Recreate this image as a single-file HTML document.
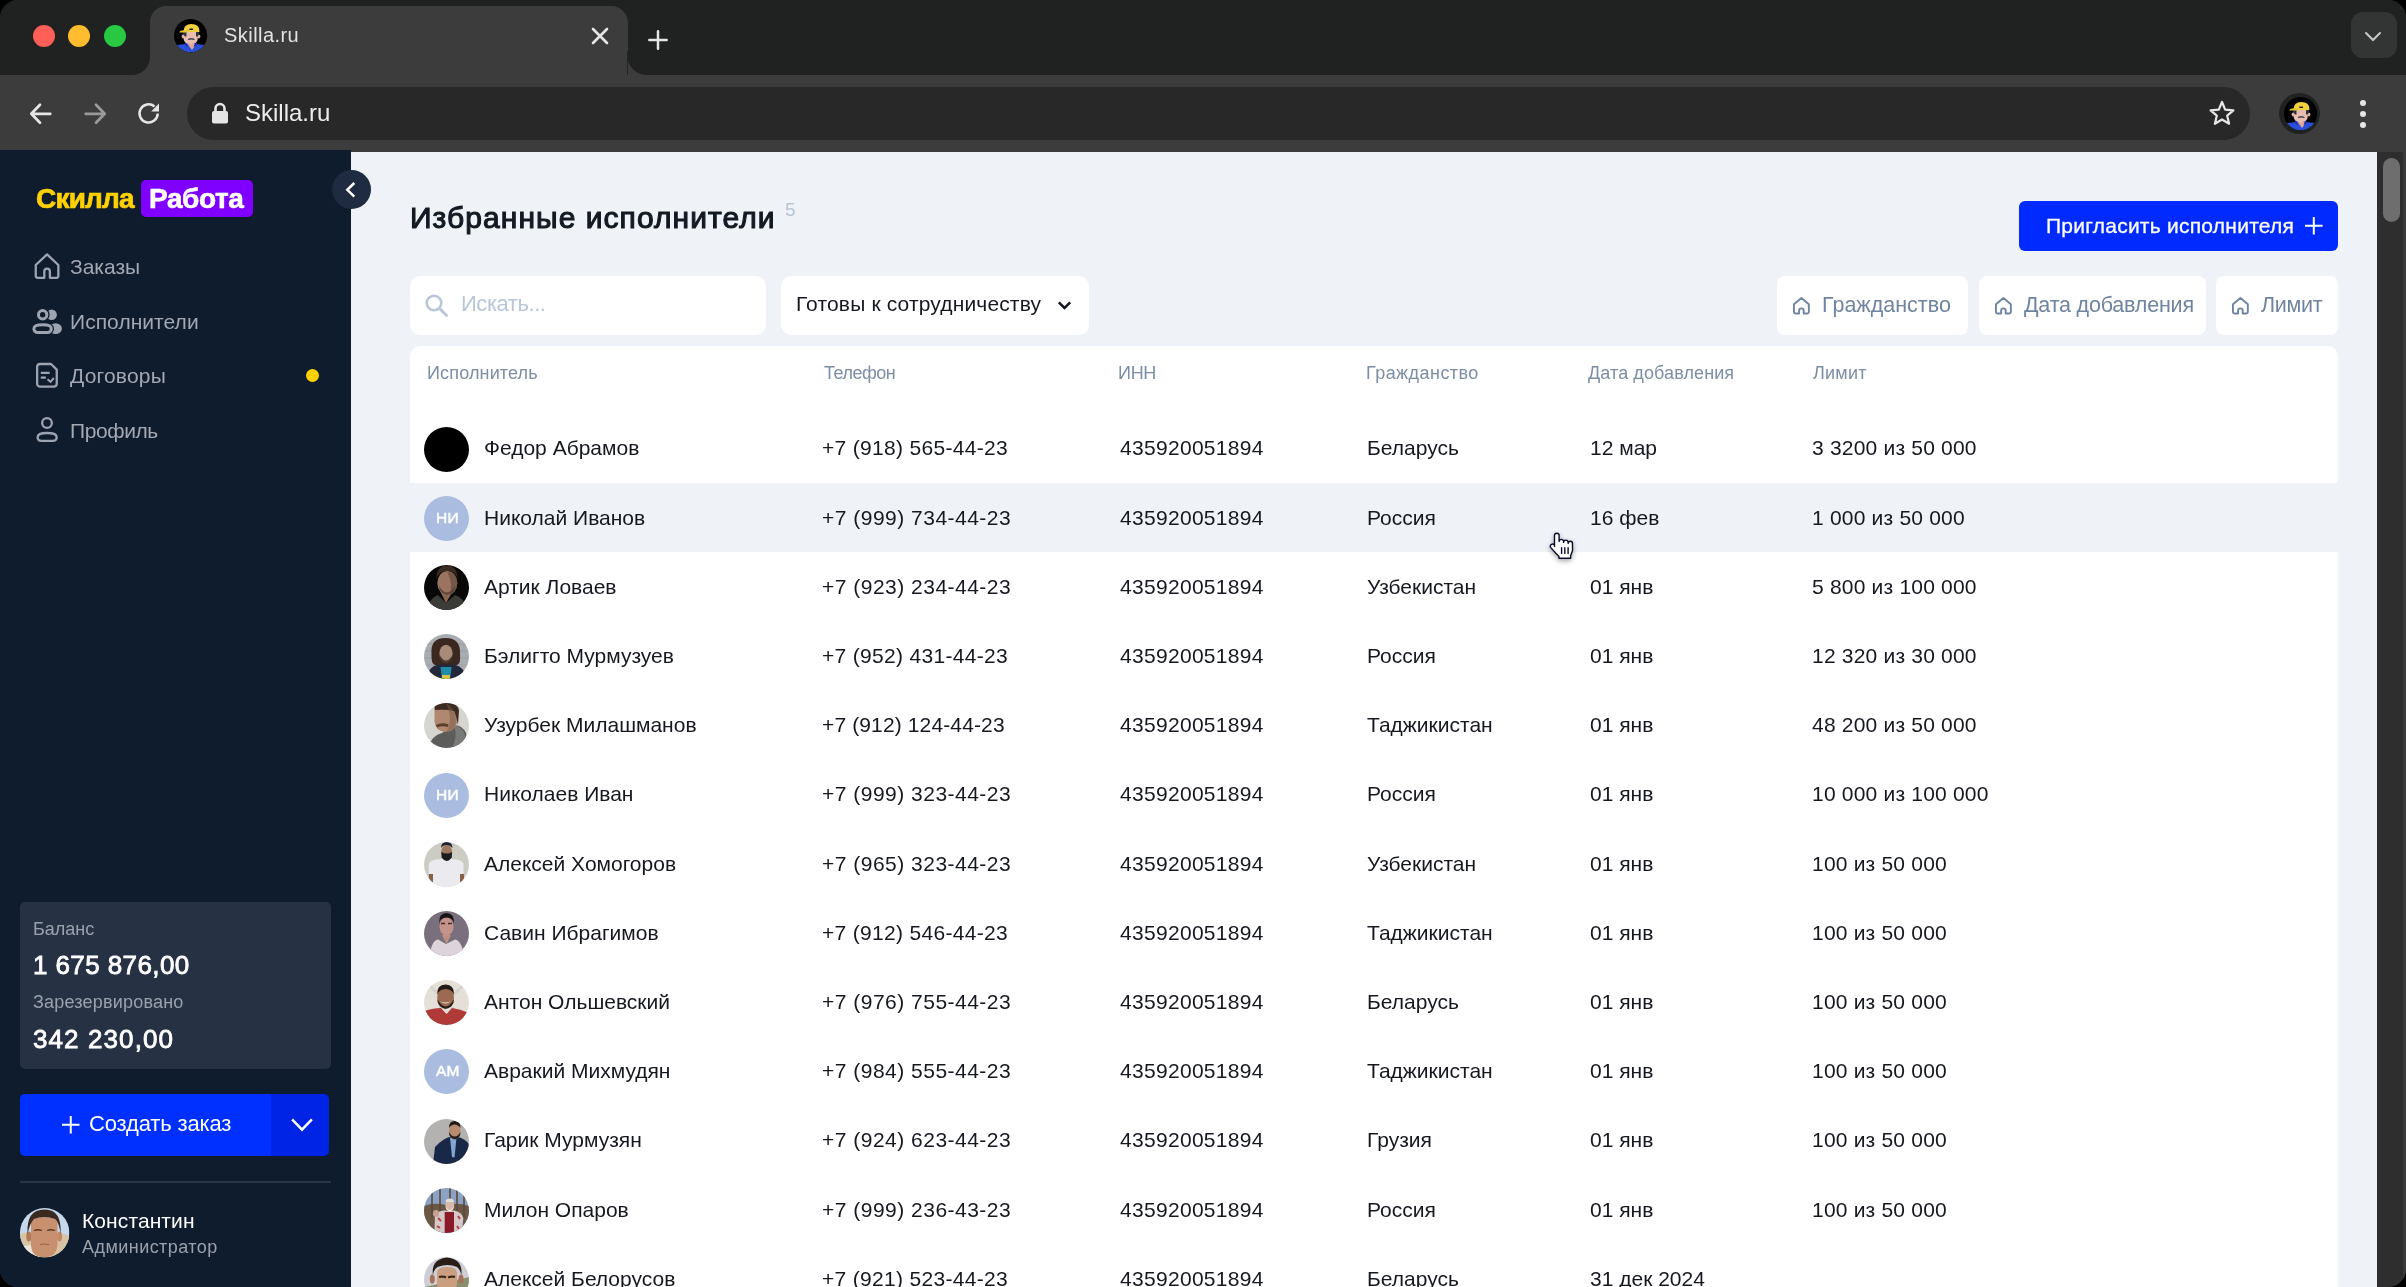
<!DOCTYPE html><html><head><meta charset="utf-8"><style>
*{margin:0;padding:0;box-sizing:border-box}
html,body{width:2406px;height:1287px;overflow:hidden;background:#000}
body{font-family:"Liberation Sans",sans-serif;position:relative}
.win{position:absolute;left:0;top:0;width:2406px;height:1287px;border-radius:18px;overflow:hidden;background:#202221}
.t{position:absolute;line-height:1;white-space:nowrap;will-change:transform}
.abs{position:absolute}
svg{position:absolute;overflow:visible}
</style></head><body>
<div class="win">
<div class="abs" style="left:0;top:0;width:2406px;height:75px;background:#202221"></div>
<div class="abs" style="left:33px;top:25px;width:22px;height:22px;border-radius:50%;background:#ff5f57"></div>
<div class="abs" style="left:68px;top:25px;width:22px;height:22px;border-radius:50%;background:#febc2e"></div>
<div class="abs" style="left:103.5px;top:25px;width:22px;height:22px;border-radius:50%;background:#28c840"></div>
<div class="abs" style="left:150px;top:6px;width:477.5px;height:70px;background:#3c3c3c;border-radius:16px 17px 0 0"></div>
<div class="abs" style="left:132px;top:57px;width:18px;height:18px;background:radial-gradient(circle at 0 0,#202221 17.5px,#3c3c3c 18.5px)"></div>
<div class="abs" style="left:627px;top:55px;width:20px;height:20px;background:radial-gradient(circle at 100% 0,#202221 19.5px,#3c3c3c 20.5px)"></div>
<div class="abs" style="left:627.2px;top:51px;width:1px;height:24px;background:#262626"></div>
<svg style="left:173.7px;top:19.1px" width="33.2" height="33.2" viewBox="0 0 33.2 33.2"><circle cx="16.6" cy="16.6" r="16.6" fill="#000"/><clipPath id="fc"><circle cx="16.6" cy="16.6" r="16.6"/></clipPath><g clip-path="url(#fc)"><path d="M0 33.2V27Q4 25.5 10 25.2L13 22.5H20.5L23.5 25.2Q29 25.5 33.2 27V33.2Z" fill="#2b4fd8"/><path d="M13.5 25L18 31L22.3 25Z" fill="#e2a898"/><path d="M12 22.5L14 28L10.5 26Z M21.5 22.5L19.5 28L23 26Z" fill="#1a2fa0"/><ellipse cx="9.2" cy="17.5" rx="1.6" ry="2.1" fill="#e0b0a0"/><ellipse cx="24.8" cy="17.5" rx="1.6" ry="2.1" fill="#e0b0a0"/><path d="M9.7 13V20Q10 25 16.7 25.2Q23.5 25 23.7 20V13Z" fill="#e8bcae"/><path d="M8.9 13H12.5V17.4H11Q9.5 16 8.9 13Z M25.2 13H22V17.4H23.5Q25 16 25.2 13Z" fill="#2a3244"/><path d="M13.7 20.9Q14.5 18.6 17.3 19.3Q20.1 18.6 20.9 20.9Q17.3 20 13.7 20.9Z" fill="#252c3c"/><path d="M9.4 13.1Q9.4 5.1 17.4 5.1Q25.4 5.1 25.4 12V13.1Z" fill="#f0d03c"/><path d="M5.2 13.4Q6 11.3 10 11.2H14V13.6H6Z" fill="#e8c830"/><rect x="15.3" y="9.6" width="3.8" height="1.4" rx=".5" fill="#1a2040"/></g></svg>
<div class="t" style="left:224px;top:25.3px;font-size:20px;color:#e3e3e3;font-weight:400;letter-spacing:0.45px;">Skilla.ru</div>
<svg style="left:592px;top:28px" width="16" height="16" viewBox="0 0 16 16"><path d="M1 1L15 15M15 1L1 15" stroke="#e6e6e6" stroke-width="2.6" stroke-linecap="round"/></svg>
<svg style="left:648px;top:30px" width="20" height="20" viewBox="0 0 20 20"><path d="M10 1.3V18.7M1.3 10H18.7" stroke="#e6e6e6" stroke-width="2.5" stroke-linecap="round"/></svg>
<div class="abs" style="left:2351px;top:12px;width:46px;height:46px;border-radius:12px;background:#333534"></div>
<svg style="left:2365px;top:32px" width="16" height="9" viewBox="0 0 16 9"><path d="M1 1L8 8L15 1" stroke="#c8c8c8" stroke-width="2" fill="none" stroke-linecap="round"/></svg>
<div class="abs" style="left:0;top:75px;width:2406px;height:77px;background:#3c3c3c"></div>
<div class="abs" style="left:187px;top:87px;width:2063px;height:53px;border-radius:27px;background:#282828"></div>
<svg style="left:29px;top:101.5px" width="24" height="24" viewBox="0 0 24 24"><path d="M21.3 11.8H3M11 2.8L2.3 11.8L11 20.8" stroke="#e6e6e6" stroke-width="2.7" fill="none" stroke-linecap="round" stroke-linejoin="round"/></svg>
<svg style="left:83px;top:101.5px" width="24" height="24" viewBox="0 0 24 24"><path d="M2.7 11.8H21M13 2.8L21.7 11.8L13 20.8" stroke="#9a9a9a" stroke-width="2.7" fill="none" stroke-linecap="round" stroke-linejoin="round"/></svg>
<svg style="left:137px;top:102px" width="24" height="24" viewBox="0 0 24 24"><path d="M20.7 11.5A9.1 9.1 0 1 1 17.5 4.5" stroke="#e6e6e6" stroke-width="2.5" fill="none"/><path d="M22 1.6V9.6H14.2Z" fill="#e6e6e6"/></svg>
<svg style="left:211px;top:102px" width="18" height="22" viewBox="0 0 18 22"><rect x="1" y="9" width="16" height="12.5" rx="2" fill="#e6e6e6"/><path d="M4.5 10V6.5A4.5 4.5 0 0 1 13.5 6.5V10" stroke="#e6e6e6" stroke-width="2.6" fill="none"/></svg>
<div class="t" style="left:245px;top:101.3px;font-size:24px;color:#ececec;font-weight:400;letter-spacing:0px;">Skilla.ru</div>
<svg style="left:2209px;top:100px" width="26" height="26" viewBox="0 0 26 26"><path d="M13 2L16.2 9.6L24.4 10.3L18.2 15.7L20.1 23.8L13 19.5L5.9 23.8L7.8 15.7L1.6 10.3L9.8 9.6Z" stroke="#e6e6e6" stroke-width="2.2" fill="none" stroke-linejoin="round"/></svg>
<div class="abs" style="left:2279px;top:93px;width:41.2px;height:41.2px;border-radius:50%;background:#202221"></div>
<svg style="left:2283.9px;top:96.9px" width="33.2" height="33.2" viewBox="0 0 33.2 33.2"><circle cx="16.6" cy="16.6" r="16.6" fill="#000"/><clipPath id="pc"><circle cx="16.6" cy="16.6" r="16.6"/></clipPath><g clip-path="url(#pc)"><path d="M0 33.2V27Q4 25.5 10 25.2L13 22.5H20.5L23.5 25.2Q29 25.5 33.2 27V33.2Z" fill="#2b4fd8"/><path d="M13.5 25L18 31L22.3 25Z" fill="#e2a898"/><path d="M12 22.5L14 28L10.5 26Z M21.5 22.5L19.5 28L23 26Z" fill="#1a2fa0"/><ellipse cx="9.2" cy="17.5" rx="1.6" ry="2.1" fill="#e0b0a0"/><ellipse cx="24.8" cy="17.5" rx="1.6" ry="2.1" fill="#e0b0a0"/><path d="M9.7 13V20Q10 25 16.7 25.2Q23.5 25 23.7 20V13Z" fill="#e8bcae"/><path d="M8.9 13H12.5V17.4H11Q9.5 16 8.9 13Z M25.2 13H22V17.4H23.5Q25 16 25.2 13Z" fill="#2a3244"/><path d="M13.7 20.9Q14.5 18.6 17.3 19.3Q20.1 18.6 20.9 20.9Q17.3 20 13.7 20.9Z" fill="#252c3c"/><path d="M9.4 13.1Q9.4 5.1 17.4 5.1Q25.4 5.1 25.4 12V13.1Z" fill="#f0d03c"/><path d="M5.2 13.4Q6 11.3 10 11.2H14V13.6H6Z" fill="#e8c830"/><rect x="15.3" y="9.6" width="3.8" height="1.4" rx=".5" fill="#1a2040"/></g></svg>
<div class="abs" style="left:2359.5px;top:100px;width:6px;height:6px;border-radius:50%;background:#e6e6e6"></div>
<div class="abs" style="left:2359.5px;top:111px;width:6px;height:6px;border-radius:50%;background:#e6e6e6"></div>
<div class="abs" style="left:2359.5px;top:121.5px;width:6px;height:6px;border-radius:50%;background:#e6e6e6"></div>
<div class="abs" style="left:0;top:150px;width:351px;height:1137px;background:#0f1c2d"></div>
<div class="abs" style="left:351px;top:152px;width:2026px;height:1135px;background:#eff2f7"></div>
<div class="abs" style="left:2377px;top:152px;width:29px;height:1135px;background:#2e2e2e"></div>
<div class="abs" style="left:2403px;top:152px;width:3px;height:1135px;background:#3a3a3a"></div>
<div class="abs" style="left:2383px;top:158px;width:17px;height:64px;border-radius:9px;background:#6e6e6e"></div>
<div class="t" style="left:35.8px;top:184.9px;font-size:28px;color:#ffd100;font-weight:700;letter-spacing:-0.8px;-webkit-text-stroke:0.7px #ffd100;">Скилла</div>
<div class="abs" style="left:140.5px;top:180px;width:112.5px;height:37px;border-radius:5px;background:#8000ff"></div>
<div class="t" style="left:149.2px;top:184.9px;font-size:28px;color:#ffffff;font-weight:700;letter-spacing:-0.4px;-webkit-text-stroke:0.6px #fff;">Работа</div>
<div class="abs" style="left:331.5px;top:170px;width:39px;height:39px;border-radius:50%;background:#1f2b40"></div>
<svg style="left:345px;top:182px" width="12" height="16" viewBox="0 0 12 16"><path d="M9.3 1L2.3 7.8L9.3 14.6" stroke="#fff" stroke-width="2.5" fill="none" stroke-linecap="butt" stroke-linejoin="miter"/></svg>
<svg style="left:34px;top:253px" width="26" height="26" viewBox="0 0 26 26"><path d="M10.3 24.85V18.45A2.8 2.8 0 0 1 15.9 18.45V24.85H22.35A2 2 0 0 0 24.35 22.85V12L13.05 1.35L1.75 12V22.85A2 2 0 0 0 3.75 24.85Z" stroke="#9ea3b0" stroke-width="2.3" fill="none" stroke-linejoin="round"/></svg>
<svg style="left:30px;top:306px" width="34" height="30" viewBox="30 306 34 30"><circle cx="51.7" cy="314.7" r="5.2" fill="#9ea3b0"/><ellipse cx="55.6" cy="328.6" rx="6.3" ry="5.4" fill="#9ea3b0"/><circle cx="42.65" cy="314.75" r="7.0" fill="#0f1c2d"/><path d="M37.6 332.45H47.6A3.7 3.8 0 0 0 51.3 328.65Q51.3 324.85 42.6 324.85Q33.9 324.85 33.9 328.65A3.7 3.8 0 0 0 37.6 332.45Z" fill="#0f1c2d" stroke="#0f1c2d" stroke-width="5.4"/><circle cx="42.65" cy="314.75" r="4.2" stroke="#9ea3b0" stroke-width="3.0" fill="none"/><path d="M37.6 332.45H47.6A3.7 3.8 0 0 0 51.3 328.65Q51.3 324.85 42.6 324.85Q33.9 324.85 33.9 328.65A3.7 3.8 0 0 0 37.6 332.45Z" stroke="#9ea3b0" stroke-width="3.0" fill="none"/></svg>
<svg style="left:34px;top:360px" width="26" height="30" viewBox="34 360 26 30"><path d="M40 364H51L56.75 369.6V383.8A3 3 0 0 1 53.75 386.65H40.15A3 3 0 0 1 37.15 383.65V367A3 3 0 0 1 40 364Z" stroke="#9ea3b0" stroke-width="2.3" fill="none" stroke-linejoin="round"/><path d="M40.8 372.9H49.6M40.8 377.7H45.9" stroke="#9ea3b0" stroke-width="2.3" stroke-linecap="butt"/><path d="M47.5 379.2L50.5 381.8L53.8 378" stroke="#9ea3b0" stroke-width="2" fill="none" stroke-linecap="butt" stroke-linejoin="miter"/></svg>
<svg style="left:34px;top:414px" width="26" height="30" viewBox="34 414 26 30"><circle cx="47" cy="423" r="4.85" stroke="#9ea3b0" stroke-width="2.3" fill="none"/><path d="M37.6 437.2C37.6 434.3 42 433 47.1 433C52.2 433 56.7 434.3 56.7 437.2C56.7 439.7 55.3 440.85 52.7 440.85H41.5C38.9 440.85 37.6 439.7 37.6 437.2Z" stroke="#9ea3b0" stroke-width="2.3" fill="none"/></svg>
<div class="t" style="left:70px;top:256.2px;font-size:21px;color:#a3a8b3;font-weight:400;letter-spacing:0px;">Заказы</div>
<div class="t" style="left:70px;top:311.0px;font-size:21px;color:#a3a8b3;font-weight:400;letter-spacing:0.05px;">Исполнители</div>
<div class="t" style="left:70px;top:364.7px;font-size:21px;color:#a3a8b3;font-weight:400;letter-spacing:0.2px;">Договоры</div>
<div class="t" style="left:70px;top:419.7px;font-size:21px;color:#a3a8b3;font-weight:400;letter-spacing:-0.4px;">Профиль</div>
<div class="abs" style="left:306px;top:369px;width:13px;height:13px;border-radius:50%;background:#ffd100"></div>
<div class="abs" style="left:20px;top:902px;width:311px;height:167px;border-radius:5px;background:#263244"></div>
<div class="t" style="left:32.6px;top:920.1px;font-size:18px;color:#9aa1ad;font-weight:400;letter-spacing:0px;">Баланс</div>
<div class="t" style="left:32.6px;top:952.0px;font-size:26px;color:#ffffff;font-weight:400;letter-spacing:0.4px;-webkit-text-stroke:0.8px #fff;">1 675 876,00</div>
<div class="t" style="left:32.6px;top:992.8px;font-size:18px;color:#9aa1ad;font-weight:400;letter-spacing:0.2px;">Зарезервировано</div>
<div class="t" style="left:32.6px;top:1025.6px;font-size:26px;color:#ffffff;font-weight:400;letter-spacing:1.1px;-webkit-text-stroke:0.8px #fff;">342 230,00</div>
<div class="abs" style="left:20px;top:1094px;width:309px;height:61.5px;border-radius:5px;background:#0024e6;overflow:hidden"><div class="abs" style="left:0;top:0;width:251px;height:61.5px;background:#0030ff"></div></div>
<svg style="left:61.5px;top:1116px" width="17.5" height="17.5" viewBox="0 0 17.5 17.5"><path d="M8.75 0V17.5M0 8.75H17.5" stroke="#fff" stroke-width="2"/></svg>
<div class="t" style="left:89px;top:1112.9px;font-size:22px;color:#ffffff;font-weight:400;letter-spacing:-0.15px;">Создать заказ</div>
<svg style="left:292px;top:1118.5px" width="20" height="13" viewBox="0 0 20 13"><path d="M1 1.3L10 10.6L19 1.3" stroke="#fff" stroke-width="2.5" fill="none" stroke-linecap="square" stroke-linejoin="miter"/></svg>
<div class="abs" style="left:20px;top:1180.5px;width:311px;height:2px;background:#2a3546"></div>
<svg style="left:19.9px;top:1207.6px" width="49.4" height="49.4" viewBox="0 0 49.4 49.4"><clipPath id="uc"><circle cx="24.7" cy="24.7" r="24.7"/></clipPath><g clip-path="url(#uc)"><rect width="49.4" height="49.4" fill="#c6d8ec"/><path d="M0 26Q12 22 24 26Q36 22 49.4 28V49.4H0Z" fill="#d8c4a4"/><path d="M0 40Q10 34 20 40L20 49.4H0Z" fill="#ece4d8"/><ellipse cx="8.8" cy="28.5" rx="2.5" ry="5" fill="#b07a5a"/><ellipse cx="39.6" cy="28.5" rx="2.5" ry="5" fill="#c08a6a"/><path d="M11 16Q11 9 24 9Q37.5 9 37.5 16V36Q37 49.4 24 49.4Q11 49.4 11 36Z" fill="#c8906e"/><path d="M14 22.5Q18 21 22 22.5M27 22.5Q31 21 35 22.5" stroke="#5a3a28" stroke-width="1.3" fill="none"/><path d="M20 36.5Q24 35.5 29 36.5" stroke="#9a5a4a" stroke-width="1.2" fill="none"/><path d="M7.5 26Q6 1 25 1.4Q42 1.5 40.6 26Q39 14 35 11Q24 7 14 11Q10 15 7.5 26Z" fill="#3a2a20"/></g></svg>
<div class="t" style="left:82px;top:1209.6px;font-size:21px;color:#ffffff;font-weight:400;letter-spacing:0.1px;">Константин</div>
<div class="t" style="left:82px;top:1238.2px;font-size:18px;color:#9aa1ad;font-weight:400;letter-spacing:0.45px;">Администратор</div>
<div class="t" style="left:410.3px;top:203.2px;font-size:30px;color:#141a24;font-weight:400;letter-spacing:1.05px;-webkit-text-stroke:1.1px #141a24;">Избранные исполнители</div>
<div class="t" style="left:784.5px;top:199.9px;font-size:19px;color:#b8c2d0;font-weight:400;letter-spacing:0px;">5</div>
<div class="abs" style="left:2019px;top:201px;width:319px;height:50px;border-radius:6px;background:#002aff"></div>
<div class="t" style="left:2046px;top:214.8px;font-size:21px;color:#ffffff;font-weight:400;letter-spacing:0.25px;-webkit-text-stroke:0.3px #fff;">Пригласить исполнителя</div>
<svg style="left:2304.7px;top:217.3px" width="17.6" height="17.6" viewBox="0 0 17.6 17.6"><path d="M8.8 0V17.6M0 8.8H17.6" stroke="#fff" stroke-width="2"/></svg>
<div class="abs" style="left:410px;top:276px;width:356px;height:58.5px;border-radius:10px;background:#fff"></div>
<svg style="left:424px;top:293px" width="26" height="26" viewBox="0 0 26 26"><circle cx="10" cy="10" r="7.3" stroke="#b9c5d8" stroke-width="2.6" fill="none"/><path d="M15.5 15.5L22.5 22.5" stroke="#b9c5d8" stroke-width="2.8" stroke-linecap="round"/></svg>
<div class="t" style="left:461px;top:293.2px;font-size:22px;color:#b9c5d8;font-weight:400;letter-spacing:-0.45px;">Искать...</div>
<div class="abs" style="left:781px;top:276px;width:308px;height:58.5px;border-radius:10px;background:#fff"></div>
<div class="t" style="left:796px;top:293.1px;font-size:21px;color:#15191f;font-weight:400;letter-spacing:0.15px;">Готовы к сотрудничеству</div>
<svg style="left:1057px;top:300px" width="16" height="12" viewBox="0 0 16 12"><path d="M1.8 2.4L7.5 8L13.2 2.4" stroke="#15191f" stroke-width="2.5" fill="none" stroke-linecap="butt" stroke-linejoin="miter"/></svg>
<div class="abs" style="left:1777.4px;top:276px;width:191.0px;height:58.5px;border-radius:8px;background:#fff"></div>
<svg style="left:1793.4px;top:297px" width="17" height="18" viewBox="0 0 17 18"><path d="M6.1 16.55V13.65A2.3 2.3 0 0 1 10.7 13.65V16.55H14.35A1.5 1.5 0 0 0 15.85 15.05V7.2L8.4 0.95L0.95 7.2V15.05A1.5 1.5 0 0 0 2.45 16.55Z" stroke="#6e84a0" stroke-width="1.9" fill="none" stroke-linejoin="round"/></svg>
<div class="t" style="left:1822.4px;top:294.8px;font-size:21.5px;color:#6e84a0;font-weight:400;letter-spacing:0px;">Гражданство</div>
<div class="abs" style="left:1978.6px;top:276px;width:227.4000000000001px;height:58.5px;border-radius:8px;background:#fff"></div>
<svg style="left:1994.6px;top:297px" width="17" height="18" viewBox="0 0 17 18"><path d="M6.1 16.55V13.65A2.3 2.3 0 0 1 10.7 13.65V16.55H14.35A1.5 1.5 0 0 0 15.85 15.05V7.2L8.4 0.95L0.95 7.2V15.05A1.5 1.5 0 0 0 2.45 16.55Z" stroke="#6e84a0" stroke-width="1.9" fill="none" stroke-linejoin="round"/></svg>
<div class="t" style="left:2023.6px;top:294.8px;font-size:21.5px;color:#6e84a0;font-weight:400;letter-spacing:-0.2px;">Дата добавления</div>
<div class="abs" style="left:2215.6px;top:276px;width:122.40000000000009px;height:58.5px;border-radius:8px;background:#fff"></div>
<svg style="left:2231.6px;top:297px" width="17" height="18" viewBox="0 0 17 18"><path d="M6.1 16.55V13.65A2.3 2.3 0 0 1 10.7 13.65V16.55H14.35A1.5 1.5 0 0 0 15.85 15.05V7.2L8.4 0.95L0.95 7.2V15.05A1.5 1.5 0 0 0 2.45 16.55Z" stroke="#6e84a0" stroke-width="1.9" fill="none" stroke-linejoin="round"/></svg>
<div class="t" style="left:2260.6px;top:294.8px;font-size:21.5px;color:#6e84a0;font-weight:400;letter-spacing:-0.3px;">Лимит</div>
<div class="abs" style="left:410px;top:345.5px;width:1928px;height:1000px;border-radius:10px;background:#fff"></div>
<div class="t" style="left:427px;top:364.2px;font-size:18px;color:#7b8ea6;font-weight:400;letter-spacing:0.15px;">Исполнитель</div>
<div class="t" style="left:824px;top:364.2px;font-size:18px;color:#7b8ea6;font-weight:400;letter-spacing:-0.5px;">Телефон</div>
<div class="t" style="left:1118px;top:364.2px;font-size:18px;color:#7b8ea6;font-weight:400;letter-spacing:-0.3px;">ИНН</div>
<div class="t" style="left:1366px;top:364.2px;font-size:18px;color:#7b8ea6;font-weight:400;letter-spacing:0.45px;">Гражданство</div>
<div class="t" style="left:1588px;top:364.2px;font-size:18px;color:#7b8ea6;font-weight:400;letter-spacing:0.1px;">Дата добавления</div>
<div class="t" style="left:1813.4px;top:364.2px;font-size:18px;color:#7b8ea6;font-weight:400;letter-spacing:0.25px;">Лимит</div>
<div class="abs" style="left:410px;top:483.3px;width:1928px;height:69.2px;background:#eff2f7"></div>
<div class="abs" style="left:424.2px;top:426.5px;width:45px;height:45px;border-radius:50%;background:#000"></div>
<div class="t" style="left:484.4px;top:437.4px;font-size:21px;color:#15181e;font-weight:400;letter-spacing:0px;">Федор Абрамов</div>
<div class="t" style="left:821.9px;top:437.4px;font-size:21px;color:#15181e;font-weight:400;letter-spacing:0.31px;">+7 (918) 565-44-23</div>
<div class="t" style="left:1120px;top:437.4px;font-size:21px;color:#15181e;font-weight:400;letter-spacing:0.3px;">435920051894</div>
<div class="t" style="left:1367px;top:437.4px;font-size:21px;color:#15181e;font-weight:400;letter-spacing:0px;">Беларусь</div>
<div class="t" style="left:1589.6px;top:437.4px;font-size:21px;color:#15181e;font-weight:400;letter-spacing:0px;">12 мар</div>
<div class="t" style="left:1812px;top:437.4px;font-size:21px;color:#15181e;font-weight:400;letter-spacing:0.2px;">3 3200 из 50 000</div>
<div class="abs" style="left:424.2px;top:495.7px;width:45px;height:45px;border-radius:50%;background:#aabcdf"></div>
<div class="t" style="left:436.2px;top:509.7px;font-size:15.5px;color:#ffffff;font-weight:400;letter-spacing:0.2px;-webkit-text-stroke:0.5px #fff;">НИ</div>
<div class="t" style="left:484.4px;top:506.6px;font-size:21px;color:#15181e;font-weight:400;letter-spacing:0px;">Николай Иванов</div>
<div class="t" style="left:821.9px;top:506.6px;font-size:21px;color:#15181e;font-weight:400;letter-spacing:0.49px;">+7 (999) 734-44-23</div>
<div class="t" style="left:1120px;top:506.6px;font-size:21px;color:#15181e;font-weight:400;letter-spacing:0.3px;">435920051894</div>
<div class="t" style="left:1367px;top:506.6px;font-size:21px;color:#15181e;font-weight:400;letter-spacing:0px;">Россия</div>
<div class="t" style="left:1589.6px;top:506.6px;font-size:21px;color:#15181e;font-weight:400;letter-spacing:0px;">16 фев</div>
<div class="t" style="left:1812px;top:506.6px;font-size:21px;color:#15181e;font-weight:400;letter-spacing:0.2px;">1 000 из 50 000</div>
<svg style="left:424.2px;top:564.9px" width="45" height="45" viewBox="0 0 45 45"><clipPath id="cav"><circle cx="22.5" cy="22.5" r="22.5"/></clipPath><g clip-path="url(#cav)"><rect width="45" height="45" fill="#080808"/><path d="M3 45Q5 33 14 30L22 38L31 30Q41 33 43 45Z" fill="#3b3c37"/><path d="M16 26L22 38L29 26Z" fill="#8a6550"/><ellipse cx="23.3" cy="18" rx="10" ry="12" fill="#9a7461"/><path d="M23.3 7Q33 7 33.5 18Q33 27 25 30Q30 20 23.3 7Z" fill="#5e4536" opacity=".6"/><path d="M12.5 14Q12 1 23 0.5Q34 1 33.5 14Q32 6 23 6Q15 6 12.5 14Z" fill="#3a2a20"/><path d="M15 21Q23 34 31 21Q31 28 23 30Q15 28 15 21Z" fill="#4a3528" opacity=".7"/></g></svg>
<div class="t" style="left:484.4px;top:575.8px;font-size:21px;color:#15181e;font-weight:400;letter-spacing:0px;">Артик Ловаев</div>
<div class="t" style="left:821.9px;top:575.8px;font-size:21px;color:#15181e;font-weight:400;letter-spacing:0.49px;">+7 (923) 234-44-23</div>
<div class="t" style="left:1120px;top:575.8px;font-size:21px;color:#15181e;font-weight:400;letter-spacing:0.3px;">435920051894</div>
<div class="t" style="left:1367px;top:575.8px;font-size:21px;color:#15181e;font-weight:400;letter-spacing:0px;">Узбекистан</div>
<div class="t" style="left:1589.6px;top:575.8px;font-size:21px;color:#15181e;font-weight:400;letter-spacing:0px;">01 янв</div>
<div class="t" style="left:1812px;top:575.8px;font-size:21px;color:#15181e;font-weight:400;letter-spacing:0.2px;">5 800 из 100 000</div>
<svg style="left:424.2px;top:634.1px" width="45" height="45" viewBox="0 0 45 45"><clipPath id="cav"><circle cx="22.5" cy="22.5" r="22.5"/></clipPath><g clip-path="url(#cav)"><rect width="45" height="45" fill="#a9acb0"/><path d="M0 10H45M0 17H45M0 24H45M0 31H45" stroke="#9a9da2" stroke-width=".8"/><path d="M7.5 20Q6 4 21.5 4Q37 4 36 20Q37 30 33 31H11Q7 30 7.5 20Z" fill="#3a2820"/><path d="M2 45Q4 33 14 30.5H30Q41 33 43 45Z" fill="#22283a"/><path d="M16.5 33H27.7L26 45H18Z" fill="#1f8ca8"/><rect x="18" y="41" width="8" height="4" fill="#d9c24a"/><ellipse cx="22" cy="19.5" rx="6.6" ry="8.8" fill="#a88a78"/><path d="M15.6 21Q22 32 28.6 21Q28 28 22 29.5Q16 28 15.6 21Z" fill="#4a3a30"/></g></svg>
<div class="t" style="left:484.4px;top:645.0px;font-size:21px;color:#15181e;font-weight:400;letter-spacing:0px;">Бэлигто Мурмузуев</div>
<div class="t" style="left:821.9px;top:645.0px;font-size:21px;color:#15181e;font-weight:400;letter-spacing:0.31px;">+7 (952) 431-44-23</div>
<div class="t" style="left:1120px;top:645.0px;font-size:21px;color:#15181e;font-weight:400;letter-spacing:0.3px;">435920051894</div>
<div class="t" style="left:1367px;top:645.0px;font-size:21px;color:#15181e;font-weight:400;letter-spacing:0px;">Россия</div>
<div class="t" style="left:1589.6px;top:645.0px;font-size:21px;color:#15181e;font-weight:400;letter-spacing:0px;">01 янв</div>
<div class="t" style="left:1812px;top:645.0px;font-size:21px;color:#15181e;font-weight:400;letter-spacing:0.2px;">12 320 из 30 000</div>
<svg style="left:424.2px;top:703.3px" width="45" height="45" viewBox="0 0 45 45"><clipPath id="cav"><circle cx="22.5" cy="22.5" r="22.5"/></clipPath><g clip-path="url(#cav)"><rect width="45" height="45" fill="#d6d5d0"/><path d="M4 45Q8 32 18 30L30 22Q38 22 42 30L45 45Z" fill="#5c5d5a"/><path d="M30 22Q40 24 42 36L36 45H28Q34 34 30 22Z" fill="#7a7b77"/><path d="M10.5 4Q10 1 20 0L33 0Q35 10 33 20Q30 29 21 29Q11 28 10.5 18Z" fill="#b08870"/><path d="M10.5 4Q14 -1 24 0Q34 0 35 8L34 22Q32 12 30 8Q22 6 11 7Z" fill="#3c2c22"/><path d="M12 22Q18 19 24.5 21.5L24 24Q18 22.5 13 24.5Z" fill="#5a3e2c"/><path d="M22 0Q32 6 32 20Q30 28 22 29Q30 18 22 0Z" fill="#7a5a48" opacity=".5"/></g></svg>
<div class="t" style="left:484.4px;top:714.2px;font-size:21px;color:#15181e;font-weight:400;letter-spacing:0px;">Узурбек Милашманов</div>
<div class="t" style="left:821.9px;top:714.2px;font-size:21px;color:#15181e;font-weight:400;letter-spacing:0.13px;">+7 (912) 124-44-23</div>
<div class="t" style="left:1120px;top:714.2px;font-size:21px;color:#15181e;font-weight:400;letter-spacing:0.3px;">435920051894</div>
<div class="t" style="left:1367px;top:714.2px;font-size:21px;color:#15181e;font-weight:400;letter-spacing:0px;">Таджикистан</div>
<div class="t" style="left:1589.6px;top:714.2px;font-size:21px;color:#15181e;font-weight:400;letter-spacing:0px;">01 янв</div>
<div class="t" style="left:1812px;top:714.2px;font-size:21px;color:#15181e;font-weight:400;letter-spacing:0.2px;">48 200 из 50 000</div>
<div class="abs" style="left:424.2px;top:772.5px;width:45px;height:45px;border-radius:50%;background:#aabcdf"></div>
<div class="t" style="left:436.2px;top:786.5px;font-size:15.5px;color:#ffffff;font-weight:400;letter-spacing:0.2px;-webkit-text-stroke:0.5px #fff;">НИ</div>
<div class="t" style="left:484.4px;top:783.4px;font-size:21px;color:#15181e;font-weight:400;letter-spacing:0px;">Николаев Иван</div>
<div class="t" style="left:821.9px;top:783.4px;font-size:21px;color:#15181e;font-weight:400;letter-spacing:0.49px;">+7 (999) 323-44-23</div>
<div class="t" style="left:1120px;top:783.4px;font-size:21px;color:#15181e;font-weight:400;letter-spacing:0.3px;">435920051894</div>
<div class="t" style="left:1367px;top:783.4px;font-size:21px;color:#15181e;font-weight:400;letter-spacing:0px;">Россия</div>
<div class="t" style="left:1589.6px;top:783.4px;font-size:21px;color:#15181e;font-weight:400;letter-spacing:0px;">01 янв</div>
<div class="t" style="left:1812px;top:783.4px;font-size:21px;color:#15181e;font-weight:400;letter-spacing:0.2px;">10 000 из 100 000</div>
<svg style="left:424.2px;top:841.7px" width="45" height="45" viewBox="0 0 45 45"><clipPath id="cav"><circle cx="22.5" cy="22.5" r="22.5"/></clipPath><g clip-path="url(#cav)"><rect width="45" height="45" fill="#cdccc4"/><path d="M5 45L4.8 22Q6 17.5 17 17L28 17Q38.5 17.5 39.5 22L39.5 45Z" fill="#ebebef"/><path d="M4.8 32H9V45H4.8ZM36 32H40V45H36Z" fill="#8a6048"/><ellipse cx="22.7" cy="9.5" rx="5.4" ry="6.5" fill="#a07860"/><path d="M17.3 10Q22.7 13 28.1 10L27.8 15.5Q25 19 22.7 19Q20 19 17.6 15.5Z" fill="#1c1c20"/><path d="M17 6Q17 0 22.7 0Q28.5 0 28.5 6Q26 3 22.7 3Q19 3 17 6Z" fill="#1e2530"/></g></svg>
<div class="t" style="left:484.4px;top:852.6px;font-size:21px;color:#15181e;font-weight:400;letter-spacing:0px;">Алексей Хомогоров</div>
<div class="t" style="left:821.9px;top:852.6px;font-size:21px;color:#15181e;font-weight:400;letter-spacing:0.49px;">+7 (965) 323-44-23</div>
<div class="t" style="left:1120px;top:852.6px;font-size:21px;color:#15181e;font-weight:400;letter-spacing:0.3px;">435920051894</div>
<div class="t" style="left:1367px;top:852.6px;font-size:21px;color:#15181e;font-weight:400;letter-spacing:0px;">Узбекистан</div>
<div class="t" style="left:1589.6px;top:852.6px;font-size:21px;color:#15181e;font-weight:400;letter-spacing:0px;">01 янв</div>
<div class="t" style="left:1812px;top:852.6px;font-size:21px;color:#15181e;font-weight:400;letter-spacing:0.2px;">100 из 50 000</div>
<svg style="left:424.2px;top:910.9px" width="45" height="45" viewBox="0 0 45 45"><clipPath id="cav"><circle cx="22.5" cy="22.5" r="22.5"/></clipPath><g clip-path="url(#cav)"><rect width="45" height="45" fill="#7a6f7c"/><path d="M6 45Q7 30 14 28.5L22 33L31 28.5Q38 30 40 45Z" fill="#ddd3da"/><path d="M18 24H27L22.5 33Z" fill="#c0907e"/><ellipse cx="22.5" cy="15.5" rx="7" ry="9.2" fill="#c4948a"/><path d="M15.2 13Q14.5 2 22.5 2Q30.5 2 30 13Q29 6.5 22.5 6.5Q16 6.5 15.2 13Z" fill="#1a1618"/><path d="M17 12.5H21M24 12.5H28" stroke="#3a2a28" stroke-width="1.5"/></g></svg>
<div class="t" style="left:484.4px;top:921.8px;font-size:21px;color:#15181e;font-weight:400;letter-spacing:0px;">Савин Ибрагимов</div>
<div class="t" style="left:821.9px;top:921.8px;font-size:21px;color:#15181e;font-weight:400;letter-spacing:0.31px;">+7 (912) 546-44-23</div>
<div class="t" style="left:1120px;top:921.8px;font-size:21px;color:#15181e;font-weight:400;letter-spacing:0.3px;">435920051894</div>
<div class="t" style="left:1367px;top:921.8px;font-size:21px;color:#15181e;font-weight:400;letter-spacing:0px;">Таджикистан</div>
<div class="t" style="left:1589.6px;top:921.8px;font-size:21px;color:#15181e;font-weight:400;letter-spacing:0px;">01 янв</div>
<div class="t" style="left:1812px;top:921.8px;font-size:21px;color:#15181e;font-weight:400;letter-spacing:0.2px;">100 из 50 000</div>
<svg style="left:424.2px;top:980.1px" width="45" height="45" viewBox="0 0 45 45"><clipPath id="cav"><circle cx="22.5" cy="22.5" r="22.5"/></clipPath><g clip-path="url(#cav)"><rect width="45" height="45" fill="#e4e0d8"/><path d="M0 0L22 22L0 45M45 0L22 22L45 45" stroke="#d8d3ca" stroke-width="3" fill="none"/><path d="M0 31Q10 28 17 28L22.5 34L28 28Q36 29 45 33V45H0Z" fill="#b03a38"/><ellipse cx="21.6" cy="17.5" rx="8.4" ry="10.5" fill="#9c6a50"/><path d="M13.3 19Q21.6 34 30 19Q30 27 21.6 29Q13.3 27 13.3 19Z" fill="#2a201a"/><path d="M16 21Q21.6 24 27 21Q21.6 26 16 21Z" fill="#e8e0d8"/><path d="M13.2 15Q12.5 4.5 21.6 4.5Q30.5 4.5 30 15Q28 9 21.6 9Q15 9 13.2 15Z" fill="#201a18"/></g></svg>
<div class="t" style="left:484.4px;top:991.0px;font-size:21px;color:#15181e;font-weight:400;letter-spacing:0px;">Антон Ольшевский</div>
<div class="t" style="left:821.9px;top:991.0px;font-size:21px;color:#15181e;font-weight:400;letter-spacing:0.49px;">+7 (976) 755-44-23</div>
<div class="t" style="left:1120px;top:991.0px;font-size:21px;color:#15181e;font-weight:400;letter-spacing:0.3px;">435920051894</div>
<div class="t" style="left:1367px;top:991.0px;font-size:21px;color:#15181e;font-weight:400;letter-spacing:0px;">Беларусь</div>
<div class="t" style="left:1589.6px;top:991.0px;font-size:21px;color:#15181e;font-weight:400;letter-spacing:0px;">01 янв</div>
<div class="t" style="left:1812px;top:991.0px;font-size:21px;color:#15181e;font-weight:400;letter-spacing:0.2px;">100 из 50 000</div>
<div class="abs" style="left:424.2px;top:1049.3px;width:45px;height:45px;border-radius:50%;background:#aabcdf"></div>
<div class="t" style="left:436.2px;top:1063.3px;font-size:15.5px;color:#ffffff;font-weight:400;letter-spacing:0.2px;-webkit-text-stroke:0.5px #fff;">АМ</div>
<div class="t" style="left:484.4px;top:1060.2px;font-size:21px;color:#15181e;font-weight:400;letter-spacing:0px;">Авракий Михмудян</div>
<div class="t" style="left:821.9px;top:1060.2px;font-size:21px;color:#15181e;font-weight:400;letter-spacing:0.49px;">+7 (984) 555-44-23</div>
<div class="t" style="left:1120px;top:1060.2px;font-size:21px;color:#15181e;font-weight:400;letter-spacing:0.3px;">435920051894</div>
<div class="t" style="left:1367px;top:1060.2px;font-size:21px;color:#15181e;font-weight:400;letter-spacing:0px;">Таджикистан</div>
<div class="t" style="left:1589.6px;top:1060.2px;font-size:21px;color:#15181e;font-weight:400;letter-spacing:0px;">01 янв</div>
<div class="t" style="left:1812px;top:1060.2px;font-size:21px;color:#15181e;font-weight:400;letter-spacing:0.2px;">100 из 50 000</div>
<svg style="left:424.2px;top:1118.5px" width="45" height="45" viewBox="0 0 45 45"><clipPath id="cav"><circle cx="22.5" cy="22.5" r="22.5"/></clipPath><g clip-path="url(#cav)"><rect width="45" height="45" fill="#b4b2b0"/><path d="M9 45L11 28Q18 20 27 17.5L36 18.5Q44 22 45 26V45Z" fill="#1a2848"/><path d="M26 18.5L32.5 18.5L30.5 38.5L28 38Z" fill="#80a8d0"/><ellipse cx="30.7" cy="12" rx="5.8" ry="7.5" fill="#b88a70"/><path d="M24.8 13Q30.7 22 36.6 13Q36.5 19 30.7 20.5Q25 19 24.8 13Z" fill="#2a201a"/><path d="M25 9Q25 2 30.7 2Q36.5 2 36.5 9Q34 5.5 30.7 5.5Q27 5.5 25 9Z" fill="#1f1a18"/></g></svg>
<div class="t" style="left:484.4px;top:1129.4px;font-size:21px;color:#15181e;font-weight:400;letter-spacing:0px;">Гарик Мурмузян</div>
<div class="t" style="left:821.9px;top:1129.4px;font-size:21px;color:#15181e;font-weight:400;letter-spacing:0.49px;">+7 (924) 623-44-23</div>
<div class="t" style="left:1120px;top:1129.4px;font-size:21px;color:#15181e;font-weight:400;letter-spacing:0.3px;">435920051894</div>
<div class="t" style="left:1367px;top:1129.4px;font-size:21px;color:#15181e;font-weight:400;letter-spacing:0px;">Грузия</div>
<div class="t" style="left:1589.6px;top:1129.4px;font-size:21px;color:#15181e;font-weight:400;letter-spacing:0px;">01 янв</div>
<div class="t" style="left:1812px;top:1129.4px;font-size:21px;color:#15181e;font-weight:400;letter-spacing:0.2px;">100 из 50 000</div>
<svg style="left:424.2px;top:1187.7px" width="45" height="45" viewBox="0 0 45 45"><clipPath id="cav"><circle cx="22.5" cy="22.5" r="22.5"/></clipPath><g clip-path="url(#cav)"><rect width="45" height="45" fill="#8ca2c4"/><path d="M0 18Q10 14 22 17Q34 14 45 18V45H0Z" fill="#6a5844"/><path d="M8 0V30M16 0V25M33 0V28M40 0V30M26 0V18" stroke="#5a4a3c" stroke-width="1.6"/><path d="M10.4 45L11 26Q16 22 22 22.5L30 22.5Q38 24 39.3 30L38 45Z" fill="#d4c8c8"/><path d="M14 30L17 33M34 28L36 31M13 38L16 40M33 38L35 41" stroke="#b84040" stroke-width="2"/><path d="M20.7 24H30V45H20.7Z" fill="#8a1a28"/><rect x="9" y="22" width="6" height="7" rx="3" fill="#c8a090"/><ellipse cx="25.8" cy="17" rx="4.4" ry="5.8" fill="#d8b8a8"/><path d="M21.5 18Q25.8 26 30 18Q30 22 25.8 23.5Q21.5 22 21.5 18Z" fill="#f0ece8"/><path d="M21.5 14Q21.5 10.5 25.8 10.5Q30 10.5 30 14Z" fill="#e0dcd8"/></g></svg>
<div class="t" style="left:484.4px;top:1198.6px;font-size:21px;color:#15181e;font-weight:400;letter-spacing:0px;">Милон Опаров</div>
<div class="t" style="left:821.9px;top:1198.6px;font-size:21px;color:#15181e;font-weight:400;letter-spacing:0.49px;">+7 (999) 236-43-23</div>
<div class="t" style="left:1120px;top:1198.6px;font-size:21px;color:#15181e;font-weight:400;letter-spacing:0.3px;">435920051894</div>
<div class="t" style="left:1367px;top:1198.6px;font-size:21px;color:#15181e;font-weight:400;letter-spacing:0px;">Россия</div>
<div class="t" style="left:1589.6px;top:1198.6px;font-size:21px;color:#15181e;font-weight:400;letter-spacing:0px;">01 янв</div>
<div class="t" style="left:1812px;top:1198.6px;font-size:21px;color:#15181e;font-weight:400;letter-spacing:0.2px;">100 из 50 000</div>
<svg style="left:424.2px;top:1256.9px" width="45" height="45" viewBox="0 0 45 45"><clipPath id="cav"><circle cx="22.5" cy="22.5" r="22.5"/></clipPath><g clip-path="url(#cav)"><rect width="45" height="45" fill="#cfcdd5"/><path d="M45 0V45H0V30Q10 28 45 20Z" fill="#8a9070"/><ellipse cx="8.3" cy="22" rx="2.5" ry="4.5" fill="#a87058"/><ellipse cx="37" cy="22" rx="2.5" ry="4.5" fill="#a87058"/><path d="M13 16Q13 10 23 10Q33 10 33 16V32Q33 42 23 44Q13 42 13 32Z" fill="#c99f80"/><path d="M15 20Q19 19 22 20.5M24 20.5Q28 19 31 20" stroke="#3a2418" stroke-width="2"/><path d="M13 28Q13 42 23 44Q33 42 33 28Q32 38 23 40Q14 38 13 28Z" fill="#3a2a20"/><path d="M8.9 18Q7 2 23 0.5Q39 2 37.4 18Q36 12 33 10Q24 6 13.5 10Q10 12 8.9 18Z" fill="#2a1e18"/></g></svg>
<div class="t" style="left:484.4px;top:1267.8px;font-size:21px;color:#15181e;font-weight:400;letter-spacing:0px;">Алексей Белорусов</div>
<div class="t" style="left:821.9px;top:1267.8px;font-size:21px;color:#15181e;font-weight:400;letter-spacing:0.31px;">+7 (921) 523-44-23</div>
<div class="t" style="left:1120px;top:1267.8px;font-size:21px;color:#15181e;font-weight:400;letter-spacing:0.3px;">435920051894</div>
<div class="t" style="left:1367px;top:1267.8px;font-size:21px;color:#15181e;font-weight:400;letter-spacing:0px;">Беларусь</div>
<div class="t" style="left:1589.6px;top:1267.8px;font-size:21px;color:#15181e;font-weight:400;letter-spacing:0px;">31 дек 2024</div>
<svg style="left:1548px;top:532px;filter:drop-shadow(0 2.5px 2.5px rgba(0,0,0,.35))" width="27" height="28" viewBox="0 0 27 28"><path d="M6.5 14.5V3.6A2.3 2.3 0 0 1 11.1 3.6V9.6A2.25 2.25 0 0 1 15.6 9.6V10.4A2.25 2.25 0 0 1 20.1 10.4V11.4A2.2 2.2 0 0 1 24.5 11.6V18.8L22.6 23.8V26.2H11V24.4L8.3 21.8L2.6 15.4A2.3 2.3 0 0 1 6.5 13Z" fill="#fff" stroke="#0a1030" stroke-width="1.4" stroke-linejoin="round"/><path d="M13.6 15.6V21.6M16.8 15.6V21.6M20.1 15.6V21.6" stroke="#0a1030" stroke-width="1.4" stroke-linecap="round"/></svg>
</div>
</body></html>
